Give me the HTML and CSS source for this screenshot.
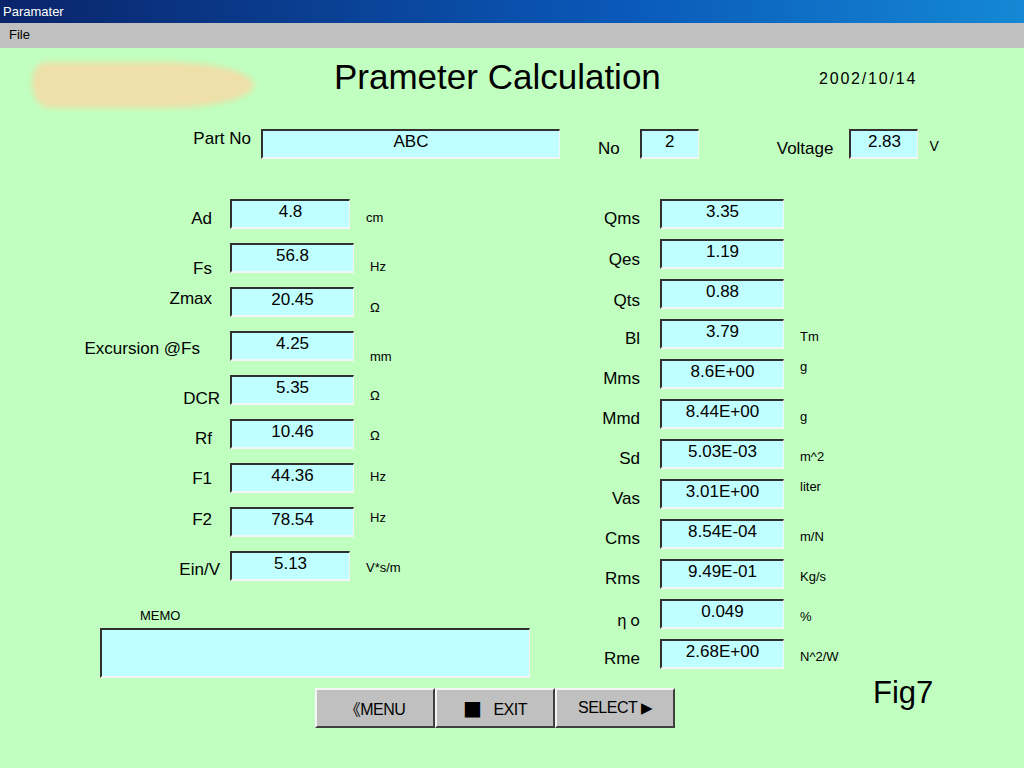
FILE: index.html
```html
<!DOCTYPE html>
<html lang="ja">
<head>
    <meta charset="UTF-8">
    <title>Paramater</title>
    <link rel="stylesheet" href="styles.css">
</head>
<body>
    <div class="titlebar">Paramater</div>
    <div class="menubar"><span class="menu-item">File</span></div>

    <div class="form">
        <div class="head">
            <div class="logo-wrap"><div class="logo"></div></div>
            <h1 class="title">Prameter Calculation</h1>
            <div class="date">2002/10/14</div>
        </div>

        <div class="top-row">
            <label class="lbl part-lbl">Part No</label>
            <div class="field part-field">ABC</div>
            <label class="lbl no-lbl">No</label>
            <div class="field no-field">2</div>
            <label class="lbl volt-lbl">Voltage</label>
            <div class="field volt-field">2.83</div>
            <span class="volt-unit">V</span>
        </div>

        <div class="columns">
            <div class="col-left">
                <div class="rows rows-left">
                    <div class="row"><span class="lbl t10">Ad</span><div class="field narrow">4.8</div><span class="unit t11">cm</span></div>
                    <div class="row"><span class="lbl t16">Fs</span><div class="field">56.8</div><span class="unit t16">Hz</span></div>
                    <div class="row"><span class="lbl t2">Zmax</span><div class="field">20.45</div><span class="unit t13">Ω</span></div>
                    <div class="row"><span class="lbl t8 pr12">Excursion @Fs</span><div class="field">4.25</div><span class="unit t18">mm</span></div>
                    <div class="row"><span class="lbl t14 pr0">DCR</span><div class="field">5.35</div><span class="unit t13">Ω</span></div>
                    <div class="row"><span class="lbl t10">Rf</span><div class="field">10.46</div><span class="unit t9">Ω</span></div>
                    <div class="row"><span class="lbl t6">F1</span><div class="field">44.36</div><span class="unit t6">Hz</span></div>
                    <div class="row"><span class="lbl t3">F2</span><div class="field">78.54</div><span class="unit t3">Hz</span></div>
                    <div class="row"><span class="lbl t9 pr0">Ein/V</span><div class="field narrow">5.13</div><span class="unit t9">V*s/m</span></div>
                </div>
                <div class="memo-label">MEMO</div>
                <div class="field memo"></div>
            </div>

            <div class="col-right">
                <div class="rows rows-right">
                    <div class="row"><span class="lbl t10">Qms</span><div class="field">3.35</div></div>
                    <div class="row"><span class="lbl t11">Qes</span><div class="field">1.19</div></div>
                    <div class="row"><span class="lbl t12">Qts</span><div class="field">0.88</div></div>
                    <div class="row"><span class="lbl t10">Bl</span><div class="field">3.79</div><span class="unit t10">Tm</span></div>
                    <div class="row"><span class="lbl t10">Mms</span><div class="field">8.6E+00</div><span class="unit t0">g</span></div>
                    <div class="row"><span class="lbl t10">Mmd</span><div class="field">8.44E+00</div><span class="unit t10">g</span></div>
                    <div class="row"><span class="lbl t10">Sd</span><div class="field">5.03E-03</div><span class="unit t10">m^2</span></div>
                    <div class="row"><span class="lbl t10">Vas</span><div class="field">3.01E+00</div><span class="unit t0">liter</span></div>
                    <div class="row"><span class="lbl t10">Cms</span><div class="field">8.54E-04</div><span class="unit t10">m/N</span></div>
                    <div class="row"><span class="lbl t10">Rms</span><div class="field">9.49E-01</div><span class="unit t10">Kg/s</span></div>
                    <div class="row"><span class="lbl t10 eta">η o</span><div class="field">0.049</div><span class="unit t10">%</span></div>
                    <div class="row"><span class="lbl t10">Rme</span><div class="field">2.68E+00</div><span class="unit t10">N^2/W</span></div>
                </div>
            </div>
        </div>

        <div class="footer">
            <div class="buttons">
                <button class="btn">《MENU</button>
                <button class="btn"><span class="sq">■</span>EXIT</button>
                <button class="btn">SELECT <span class="tri">▶</span></button>
            </div>
            <div class="fig">Fig7</div>
        </div>
    </div>
</body>
</html>
```

FILE: styles.css
```css
* {
    margin: 0;
    padding: 0;
    box-sizing: border-box;
}

body {
    width: 1024px;
    height: 768px;
    overflow: hidden;
    background: #c0ffc0;
    font-family: 'Liberation Sans', Arial, 'Noto Sans CJK JP', sans-serif;
    color: #000;
}

.titlebar {
    height: 23px;
    line-height: 23px;
    padding-left: 3px;
    font-size: 13px;
    color: #fff;
    background: linear-gradient(90deg, #0a246a 0%, #0a58b8 60%, #1488d4 100%);
}

.menubar {
    height: 25px;
    line-height: 24px;
    background: #c0c0c0;
    font-size: 13px;
}

.menu-item {
    padding-left: 9px;
}

/* header */
.head {
    display: flex;
    align-items: flex-start;
    height: 80px;
}

.logo-wrap {
    width: 334px;
    padding: 14px 0 0 32px;
}

.logo {
    width: 222px;
    height: 46px;
    background: #efdfa8;
    border-radius: 14px 40% 40% 18px / 20px 50% 50% 24px;
    filter: blur(3px);
}

.title {
    width: 485px;
    margin-top: 9px;
    font-size: 35px;
    line-height: 40px;
    font-weight: normal;
}

.date {
    margin-top: 21px;
    font-size: 16px;
    line-height: 20px;
    letter-spacing: 1.8px;
}

/* fields */
.field {
    height: 30px;
    width: 124px;
    padding-top: 1px;
    background: #c0ffff;
    border-top: 2px solid #303030;
    border-left: 2px solid #303030;
    border-right: 1px solid #f4f4f4;
    border-bottom: 2px solid #f4f4f4;
    font-size: 17px;
    line-height: 20px;
    text-align: center;
    flex-shrink: 0;
}

.field.narrow {
    width: 120px;
}

.lbl {
    font-size: 17px;
    line-height: 20px;
    white-space: nowrap;
}

.unit {
    font-size: 13px;
    line-height: 16px;
    white-space: nowrap;
}

/* top row */
.top-row {
    display: flex;
    align-items: flex-start;
    height: 70px;
    margin-top: 1px;
}

.part-lbl {
    width: 251px;
    text-align: right;
    margin-right: 10px;
}

.part-field {
    width: 299px;
}

.no-lbl {
    margin: 10px 20px 0 38px;
}

.no-field {
    width: 59px;
}

.volt-lbl {
    margin: 10px 16px 0 78px;
}

.volt-field {
    width: 69px;
}

.volt-unit {
    margin: 9px 0 0 11px;
    font-size: 14px;
    line-height: 16px;
}

/* columns */
.columns {
    display: flex;
    align-items: flex-start;
}

.col-left {
    width: 450px;
}

.rows {
    display: flex;
    flex-direction: column;
}

.rows-left {
    gap: 14px;
}

.rows-right {
    gap: 10px;
}

.row {
    display: flex;
    align-items: flex-start;
    height: 30px;
}

.rows-left .lbl {
    width: 212px;
    text-align: right;
    margin-right: 18px;
}

.rows-right .lbl {
    width: 190px;
    text-align: right;
    margin-right: 20px;
}

.rows .unit {
    margin-left: 16px;
}

.rows-left .lbl.pr12 {
    padding-right: 12px;
}

.rows-left .lbl.pr0 {
    width: 220px;
    margin-right: 10px;
}

.eta {
    font-family: 'Noto Sans CJK JP', sans-serif;
    font-size: 16px;
}

.t0 { margin-top: 0; }
.t2 { margin-top: 2px; }
.t3 { margin-top: 3px; }
.t6 { margin-top: 6px; }
.t8 { margin-top: 8px; }
.t9 { margin-top: 9px; }
.t10 { margin-top: 10px; }
.t11 { margin-top: 11px; }
.t12 { margin-top: 12px; }
.t13 { margin-top: 13px; }
.t14 { margin-top: 14px; }
.t16 { margin-top: 16px; }
.t18 { margin-top: 18px; }

.memo-label {
    margin: 27px 0 4px 140px;
    font-size: 13px;
    line-height: 16px;
}

.field.memo {
    width: 430px;
    height: 50px;
    margin-left: 100px;
}

/* footer */
.footer {
    display: flex;
    align-items: flex-start;
    margin-top: 10px;
}

.buttons {
    display: flex;
    margin-left: 315px;
}

.btn {
    width: 120px;
    height: 40px;
    background: #c0c0c0;
    border-top: 2px solid #f4f4f4;
    border-left: 2px solid #f4f4f4;
    border-right: 2px solid #404040;
    border-bottom: 2px solid #404040;
    font-family: 'Liberation Sans', 'Noto Sans CJK JP', sans-serif;
    font-size: 16px;
    letter-spacing: -0.5px;
    color: #000;
}

.sq {
    font-family: 'DejaVu Sans', sans-serif;
    font-size: 20px;
    margin-right: 12px;
}

.tri {
    font-family: 'DejaVu Sans', sans-serif;
    font-size: 15px;
}

.fig {
    margin: -12px 0 0 198px;
    font-size: 31px;
    line-height: 34px;
}
```
